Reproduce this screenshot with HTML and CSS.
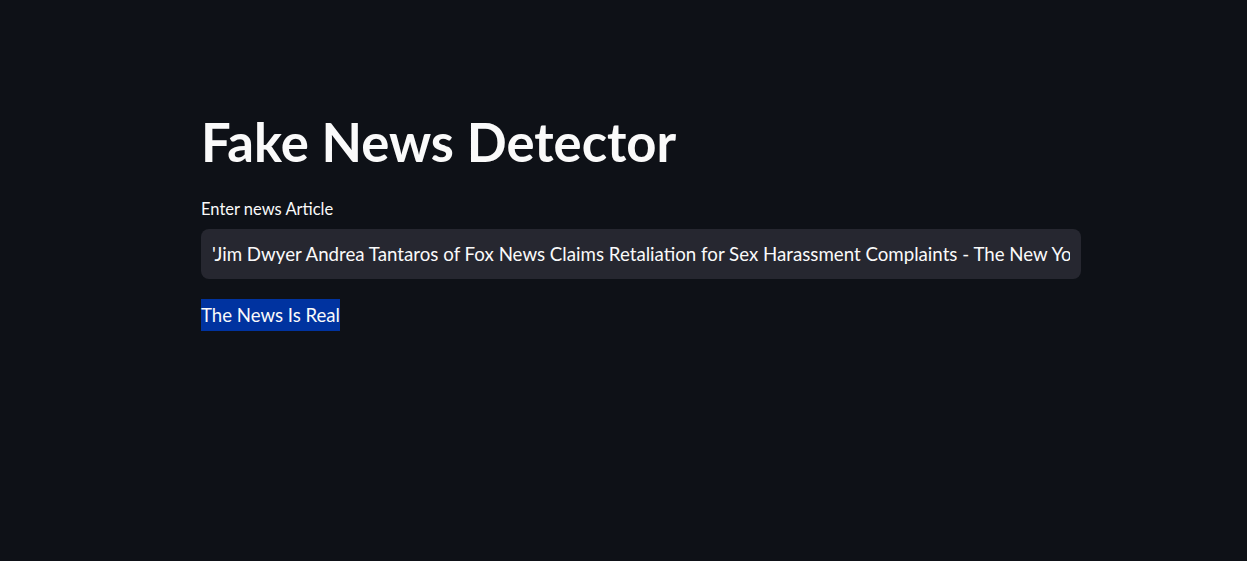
FILE: index.html
```html
<!DOCTYPE html>
<html>
<head>
<meta charset="utf-8">
<link rel="stylesheet" href="styles.css">
</head>
<body>
<main class="container">
  <h1 class="title">Fake News Detector</h1>
  <label class="label" for="news">Enter news Article</label>
  <div class="input-wrap">
    <input id="news" class="input" type="text" value="'Jim Dwyer Andrea Tantaros of Fox News Claims Retaliation for Sex Harassment Complaints - The New York Times">
  </div>
  <p class="result"><span class="mark">The News Is Real</span></p>
</main>
</body>
</html>
```
FILE: styles.css
```css
html, body {
  margin: 0;
  padding: 0;
  background: #0e1117;
  color: #fafafa;
  font-family: Lato, "Noto Sans", sans-serif;
  height: 100%;
}
.container {
  width: 880px;
  margin: 0 0 0 201px;
  padding-top: 110px;
  display: flex;
  flex-direction: column;
}
.title {
  margin: 0;
  font-size: 52.6px;
  font-weight: 700;
  line-height: 64px;
  letter-spacing: 0;
}
.label {
  margin-top: 24px;
  font-size: 16.5px;
  line-height: 22px;
}
.input-wrap {
  margin-top: 9px;
  background: #262730;
  border-radius: 8px;
  height: 50px;
  display: flex;
  align-items: center;
  padding: 0 11px;
  overflow: hidden;
}
.input {
  flex: 1;
  width: 100%;
  background: transparent;
  border: 0;
  outline: none;
  color: #fafafa;
  font-family: inherit;
  font-size: 18.7px;
  padding: 0;
}
.result {
  margin: 20px 0 0;
  font-size: 18.6px;
  line-height: 32px;
}
.mark {
  background: #0033a0;
  display: inline-block;
}
```
